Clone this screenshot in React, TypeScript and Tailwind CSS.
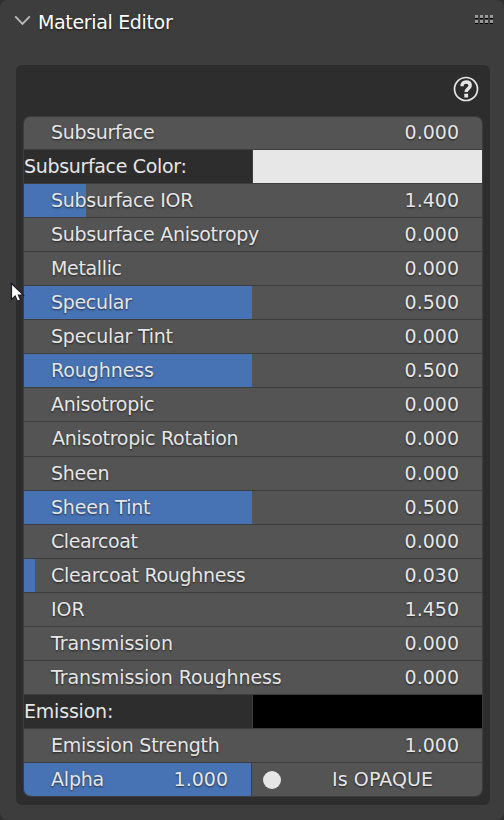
type Row = {
  label: string;
  tracking: string;
  value?: string;
  fill?: string;
  swatch?: string;
  size?: string;
};

const rows: Row[] = [
  { label: 'Subsurface', tracking: 'tracking-[-0.3px]', value: '0.000', size: 'h-[33px] leading-[30px]' },
  { label: 'Subsurface Color:', tracking: 'tracking-[-0.33px]', swatch: 'bg-[#e7e7e7]' },
  { label: 'Subsurface IOR', tracking: 'tracking-[-0.29px]', value: '1.400', fill: 'w-[62px]' },
  { label: 'Subsurface Anisotropy', tracking: 'tracking-[-0.29px]', value: '0.000' },
  { label: 'Metallic', tracking: 'tracking-[-0.35px]', value: '0.000' },
  { label: 'Specular', tracking: 'tracking-[-0.32px]', value: '0.500', fill: 'w-[228px]' },
  { label: 'Specular Tint', tracking: 'tracking-[-0.24px]', value: '0.000' },
  { label: 'Roughness', tracking: 'tracking-[-0.08px]', value: '0.500', fill: 'w-[228px]' },
  { label: 'Anisotropic', tracking: 'tracking-[-0.27px]', value: '0.000' },
  { label: 'Anisotropic Rotation', tracking: 'tracking-[-0.26px] pl-px', value: '0.000', size: 'h-[35px] leading-[32px]' },
  { label: 'Sheen', tracking: 'tracking-[-0.25px]', value: '0.000' },
  { label: 'Sheen Tint', tracking: 'tracking-[-0.2px]', value: '0.500', fill: 'w-[228px]' },
  { label: 'Clearcoat', tracking: 'tracking-[-0.44px]', value: '0.000' },
  { label: 'Clearcoat Roughness', tracking: 'tracking-[-0.3px]', value: '0.030', fill: 'w-[11px]' },
  { label: 'IOR', tracking: 'tracking-normal', value: '1.450' },
  { label: 'Transmission', tracking: 'tracking-[-0.07px]', value: '0.000' },
  { label: 'Transmission Roughness', tracking: 'tracking-[-0.08px]', value: '0.000' },
  { label: 'Emission:', tracking: 'tracking-[-0.2px]', swatch: 'bg-black' },
  { label: 'Emission Strength', tracking: 'tracking-[-0.25px]', value: '1.000' },
];

const shadow = '[text-shadow:0_1px_2px_rgba(0,0,0,0.6)]';

function PropertyRow({ label, tracking, value, fill, swatch, size = 'h-[34px] leading-[32px]' }: Row) {
  if (swatch) {
    return (
      <div className={`flex border-b border-[#3d3d3d] bg-[#2d2d2d] ${size}`}>
        <span className={`w-[228px] ${tracking}`}>{label}</span>
        <span className="w-px bg-[#3d3d3d]" />
        <span className={`flex-1 ${swatch}`} />
      </div>
    );
  }
  return (
    <div className={`relative overflow-hidden border-b border-[#3d3d3d] bg-[#545454] ${size}`}>
      {fill && <div className={`absolute inset-y-0 left-0 bg-[#4772b3] ${fill}`} />}
      <div className={`relative flex justify-between pl-[27px] pr-[23px] ${shadow}`}>
        <span className={tracking}>{label}</span>
        <span>{value}</span>
      </div>
    </div>
  );
}

function HelpIcon() {
  return (
    <svg width="26" height="26" viewBox="0 0 26 26" fill="none">
      <circle cx="13" cy="13" r="11.5" stroke="#e6e6e6" strokeWidth="1.7" />
      <path d="M9 10.2C9 7.4 10.6 6 13.1 6c2.6 0 4.1 1.4 4.1 3.5 0 3-4 3.2-4 6.6" stroke="#e6e6e6" strokeWidth="3.4" />
      <path d="M11.3 17.7h3.8v3.8h-3.8z" fill="#e6e6e6" />
    </svg>
  );
}

export default function App() {
  return (
    <div className="relative h-[820px] w-[504px] overflow-hidden bg-[#303030] font-['DejaVu_Sans',sans-serif] text-[19px] whitespace-nowrap text-[#e6e6e6]">
      <div className="h-full rounded-[8px] bg-[#3d3d3d] px-4">
        <header className="flex h-[65px] items-start justify-between">
          <div className="flex">
            <svg className="mt-[14px] -ml-[2px]" width="18" height="13" viewBox="0 0 18 13" fill="none">
              <path d="M1.2 2.4 8.5 9.9 15.8 2.4" stroke="#bcbcbc" strokeWidth="1.8" />
            </svg>
            <h1 className={`ml-[6px] leading-[44px] tracking-[-0.34px] text-white ${shadow}`}>Material Editor</h1>
          </div>
          <div className="mt-[15px] -mr-[5px] grid grid-cols-4 gap-x-[2px] gap-y-px">
            {Array.from({ length: 8 }, (_, i) => (
              <i key={i} className="h-[4px] w-[3px] border-b border-black bg-[#999]" />
            ))}
          </div>
        </header>
        <main className="h-[740px] w-[474px] rounded-[6px] bg-[#2d2d2d] px-[7px]">
          <div className="flex h-[51px] justify-end pt-[11px] pr-[4px]">
            <HelpIcon />
          </div>
          <div className="w-[460px] overflow-hidden rounded-[7px] border border-b-0 border-[#3d3d3d]">
            {rows.map((row) => (
              <PropertyRow key={row.label} {...row} />
            ))}
            <div className={`flex h-[34px] overflow-hidden rounded-b-[7px] border-b border-[#3d3d3d] leading-[32px] ${shadow}`}>
              <div className="flex w-[227px] justify-between bg-[#4772b3] pl-[27px] pr-[23px]">
                <span className="tracking-[-0.2px]">Alpha</span>
                <span>1.000</span>
              </div>
              <div className="w-px bg-[#3d3d3d]" />
              <div className="flex flex-1 items-start bg-[#545454] pl-[11px]">
                <i className="mt-[7.5px] size-[18px] rounded-full bg-[#e6e6e6]" />
                <span className="ml-[51px] tracking-[0.1px]">Is OPAQUE</span>
              </div>
            </div>
          </div>
        </main>
      </div>
      <svg className="absolute top-[282px] left-[10px]" width="15" height="22" viewBox="0 0 15 22">
        <path d="M1.5 1.5v16l3.7-3.4 2.2 5.2 3.2-1.3-2.2-4.9h5z" fill="#fff" stroke="#1c1c28" strokeWidth="1.2" />
      </svg>
    </div>
  );
}
